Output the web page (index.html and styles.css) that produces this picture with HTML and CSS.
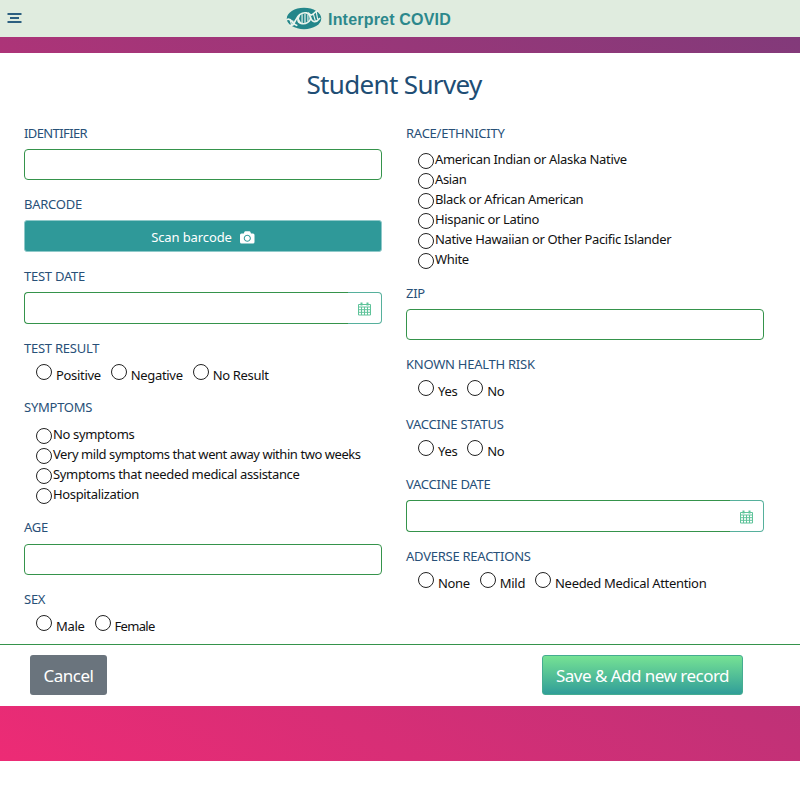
FILE: index.html
```html
<!DOCTYPE html>
<html lang="en">
<head>
<meta charset="utf-8">
<title>Student Survey</title>
<link rel="stylesheet" href="styles.css">
</head>
<body>
<header class="topbar">
  <svg class="menu" viewBox="0 0 16 12"><path d="M0.500 2h14M3 6h9M0.500 10h14" stroke="#2c5f80" stroke-width="1.900" fill="none"/></svg>
  <div class="brand">
    <svg class="logo" viewBox="0 0 38 24">
      <ellipse cx="18.500" cy="11.500" rx="17.700" ry="11" fill="#23868a"/>
      <g fill="none" stroke="#eaf4ec" stroke-width="1.700" stroke-linecap="round">
        <path d="M1.500 12.500C5 10 7 18 11 18.500"/>
        <path d="M4 18.500C9 20 9 11 14 7.500S24 5.500 25 10 20 18 15.500 16.500 12 12 14 7.500"/>
        <path d="M25 10C27 16 31 16 34.500 11.500M23 6C28 11 28 4 33 3.500"/>
        <path d="M4 12.500l2 6M7 14l.5 4M16.500 7.500v8M19.500 7v8.500M22.500 8v6M28 6.500l2 7M31 4.500l1.500 7.500M12 10.500l3 6" stroke-width="1.200"/>
      </g>
    </svg>
    <span class="brand-name">Interpret COVID</span>
  </div>
</header>
<main class="page">
  <section class="sheet">
    <h1>Student Survey</h1>
    <form class="columns">
      <div class="column">
        <div class="field"><label class="snug">IDENTIFIER</label><div class="input"></div></div>
        <div class="field tall"><label>BARCODE</label><div class="scan"><span>Scan barcode</span><svg class="camera" viewBox="0 0 15 13"><path fill="#fff" fill-rule="evenodd" d="M1.500 2.500h2.300L4.500.8Q4.700.3 5.300.3h4.200q.6 0 .8.5l.7 1.700h2q1.500 0 1.500 1.500v7q0 1.500-1.500 1.500H1.500Q0 12.500 0 11V4q0-1.500 1.500-1.500zM7.300 3.700a3.500 3.500 0 1 0 .01 0zM7.300 4.700a2.500 2.500 0 1 1-.01 0z"/></svg></div></div>
        <div class="field tall"><label>TEST DATE</label><div class="date"><div class="date-text"></div><div class="addon"><svg class="calendar" viewBox="0 0 13 14"><path d="M.5 2.500h12v10.500h-12zM.5 5h12M.5 7.700h12M.5 10.300h12M3.500 5v8M6.500 5v8M9.500 5v8"/><path class="tab" d="M3.500.5v3M9.500.5v3"/></svg></div></div></div>
        <div class="field inline-field"><label>TEST RESULT</label><div class="inline"><span class="dot"></span><span>Positive</span><span class="dot"></span><span>Negative</span><span class="dot"></span><span>No Result</span></div></div>
        <div class="field symptoms"><label>SYMPTOMS</label><ul class="list"><li><span class="dot"></span>No symptoms</li><li><span class="dot"></span><span class="long">Very mild symptoms that went away within two weeks</span></li><li><span class="dot"></span>Symptoms that needed medical assistance</li><li><span class="dot"></span>Hospitalization</li></ul></div>
        <div class="field age"><label>AGE</label><div class="input"></div></div>
        <div class="field"><label>SEX</label><div class="inline"><span class="dot"></span><span>Male</span><span class="dot"></span><span class="snug">Female</span></div></div>
      </div>
      <div class="column">
        <div class="field race"><label>RACE/ETHNICITY</label><ul class="list"><li><span class="dot"></span>American Indian or Alaska Native</li><li><span class="dot"></span>Asian</li><li><span class="dot"></span>Black or African American</li><li><span class="dot"></span>Hispanic or Latino</li><li><span class="dot"></span>Native Hawaiian or Other Pacific Islander</li><li><span class="dot"></span>White</li></ul></div>
        <div class="field"><label>ZIP</label><div class="input"></div></div>
        <div class="field choice"><label>KNOWN HEALTH RISK</label><div class="inline"><span class="dot"></span><span>Yes</span><span class="dot"></span><span>No</span></div></div>
        <div class="field choice"><label>VACCINE STATUS</label><div class="inline"><span class="dot"></span><span>Yes</span><span class="dot"></span><span>No</span></div></div>
        <div class="field tall"><label>VACCINE DATE</label><div class="date"><div class="date-text"></div><div class="addon"><svg class="calendar" viewBox="0 0 13 14"><path d="M.5 2.500h12v10.500h-12zM.5 5h12M.5 7.700h12M.5 10.300h12M3.500 5v8M6.500 5v8M9.500 5v8"/><path class="tab" d="M3.500.5v3M9.500.5v3"/></svg></div></div></div>
        <div class="field"><label>ADVERSE REACTIONS</label><div class="inline"><span class="dot"></span><span>None</span><span class="dot"></span><span>Mild</span><span class="dot"></span><span>Needed Medical Attention</span></div></div>
      </div>
    </form>
    <footer class="actions"><button class="cancel">Cancel</button><button class="save">Save &amp; Add new record</button></footer>
  </section>
</main>
</body>
</html>
```
FILE: styles.css
```css
* { box-sizing: border-box; }
body { margin: 0; background: #fff; color: #111; font: 13px/20px "Noto Sans", "Open Sans", sans-serif; }
.topbar { height: 37px; background: #e0ecdf; display: flex; justify-content: center; position: relative; }
.menu { position: absolute; left: 7px; top: 12px; width: 16px; height: 12px; }
.brand { display: flex; align-items: center; gap: 5px; width: 228px; }
.logo { width: 37px; height: 24px; }
.brand-name { font: bold 16px/20px "Liberation Sans", sans-serif; letter-spacing: 0.2px; color: #2c888c; white-space: nowrap; padding-top: 2px; }
.page { height: 724px; padding-top: 16px; background: linear-gradient(30deg, #ed2b75, #823a7a); }
.sheet { height: 653px; background: #fff; display: flex; flex-direction: column; }
h1 { margin: 0; padding: 13px 12px 0 0; height: 70px; font-size: 26px; line-height: 36px; font-weight: 400; letter-spacing: -0.65px; text-align: center; color: #204d74; }
.columns { display: grid; grid-template-columns: 358px 358px; column-gap: 24px; padding-left: 24px; height: 521px; }
.field { height: 71px; white-space: nowrap; }
.tall { height: 72px; }
.inline-field { height: 59px; }
.symptoms { height: 120px; }
.age { height: 72px; }
.race { height: 160px; }
.choice { height: 60px; }
label { display: block; height: 20px; color: #285078; letter-spacing: -0.25px; }
label.snug { letter-spacing: -0.6px; }
.input { margin-top: 6px; height: 31px; border: 1px solid #35934b; border-radius: 4px; }
.age .input { margin-top: 7px; }
.date, .scan { margin-top: 6px; height: 32px; }
.date { display: flex; }
.date-text { flex: 1; border: 1px solid #35934b; border-right: 0; border-radius: 4px 0 0 4px; }
.addon { width: 34px; display: flex; align-items: center; justify-content: flex-end; padding: 1px 10px 0 0; border: 1px solid #56b09c; border-left: 0; border-radius: 0 4px 4px 0; }
.calendar { width: 13px; height: 14px; fill: none; stroke: #5fc39a; stroke-width: 1; }
.tab { stroke-width: 2; }
.scan { display: flex; align-items: center; justify-content: center; gap: 8px; background: #2f9999; border: 1px solid #8fc9c9; border-radius: 3px; color: #fff; padding-top: 2px; letter-spacing: -0.1px; }
.camera { width: 15px; height: 13px; }
.inline { display: flex; align-items: center; height: 28px; padding-left: 12px; letter-spacing: -0.32px; }
.inline span:not(.dot) { margin: 6px 10px 0 4px; }
.inline .snug { letter-spacing: -0.7px; }
.dot { width: 16px; height: 16px; border: 1px solid #222; border-radius: 50%; flex: none; }
.list { list-style: none; margin: 0; padding: 8px 0 0 12px; letter-spacing: -0.34px; }
.long { letter-spacing: -0.44px; }
.race .list { padding-top: 7px; }
.list li { height: 20px; display: flex; gap: 1px; line-height: 18px; }
.list .dot { margin-top: 3px; }
.actions { height: 62px; border-top: 1px solid #35934b; display: flex; justify-content: space-between; padding: 10px 57px 0 30px; }
button { height: 40px; border: 0; border-radius: 3px; color: #fff; font: 17px/24px "Noto Sans", "Open Sans", sans-serif; letter-spacing: -0.52px; padding: 2px 0 0; white-space: nowrap; }
.cancel { width: 77px; background: #6a747d; }
.save { width: 201px; background: linear-gradient(#76e294, #319e99); border: 1px solid #45ac91; }
```
